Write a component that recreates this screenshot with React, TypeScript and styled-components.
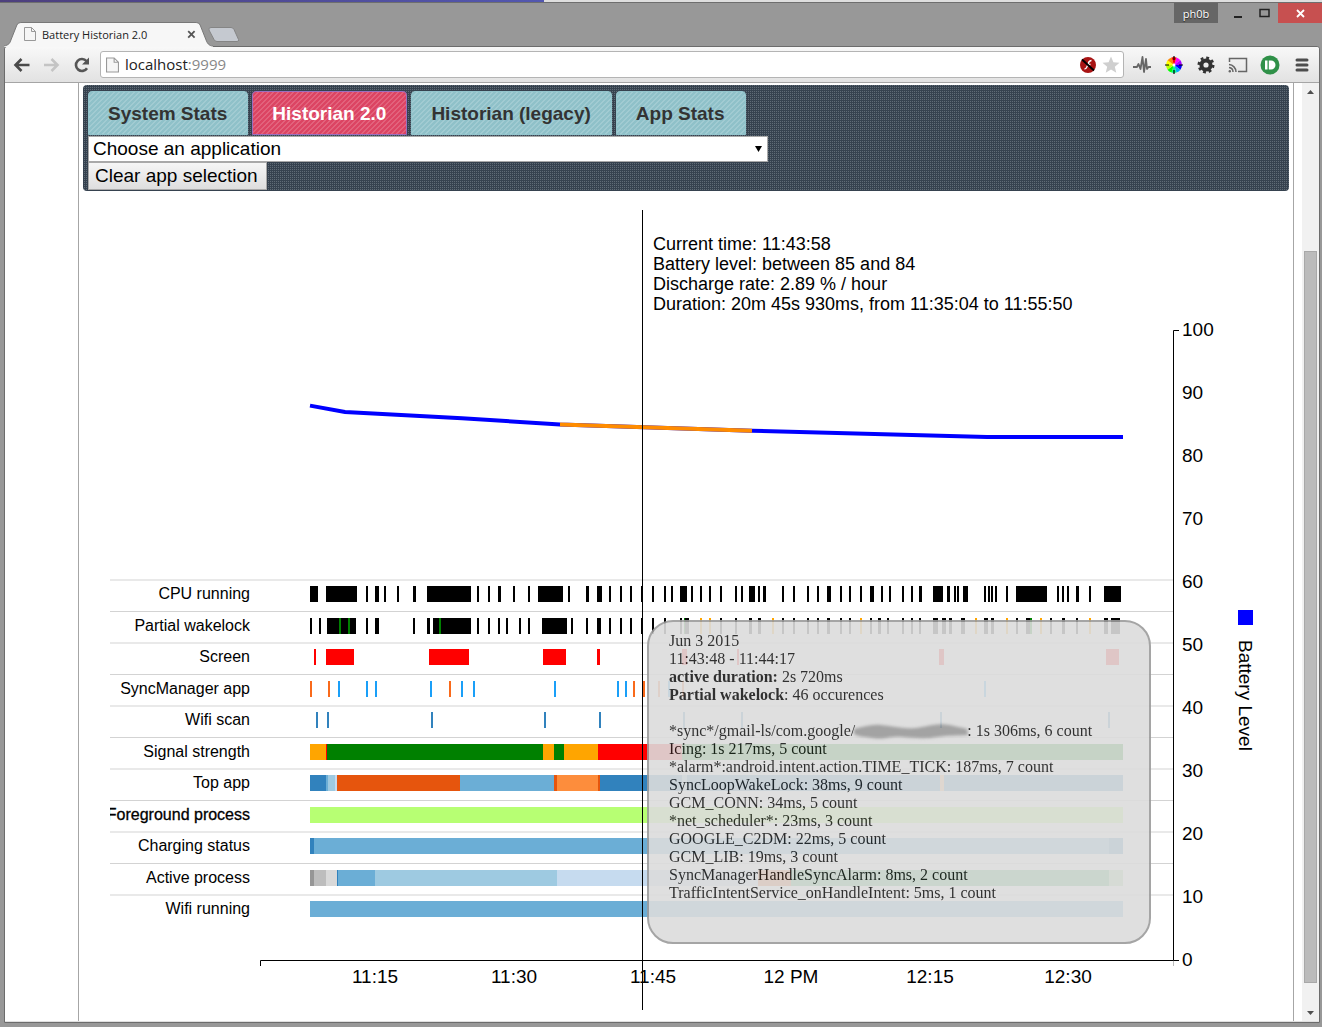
import React from "react";
import styled, { createGlobalStyle, css } from "styled-components";

const SANS = '"Liberation Sans", Arial, sans-serif';
const UI = '"Open Sans", "Noto Sans", sans-serif';
const SERIF = '"Liberation Serif", "Times New Roman", serif';

const GlobalStyle = createGlobalStyle`
  * { box-sizing: border-box; }
  body { margin: 0; background: #989898; font-family: ${SANS}; color: #000; }
  button, select, input { font-family: inherit; margin: 0; }
`;

/* ---------- browser window ---------- */

const Window = styled.div`
  display: flex;
  flex-direction: column;
  min-height: 100vh;
  background: #989898;
`;

const DesktopStrip = styled.div`
  height: 3px;
  border-bottom: 1px solid #6e6e6e;
  background: linear-gradient(90deg, #4d3f7d 0, #5257b0 544px, #dedede 544px);
`;

const TitleBar = styled.header`
  display: flex;
  align-items: flex-start;
  height: 43px;
`;

const TabStrip = styled.div`
  display: flex;
  flex: 1;
  align-items: flex-end;
  align-self: stretch;
  padding-left: 4px;
`;

const BrowserTab = styled.div`
  position: relative;
  display: flex;
  align-items: center;
  gap: 6px;
  width: 206px;
  height: 24px;
  padding: 0 14px 0 20px;
  font: 11px ${UI};
  color: #222;
  z-index: 1;
`;

const TabShape = styled.svg`
  position: absolute;
  left: 0;
  top: 0;
  z-index: -1;
`;

const TabTitle = styled.span`
  flex: 1;
  white-space: nowrap;
`;

const BareButton = styled.button`
  display: flex;
  align-items: center;
  justify-content: center;
  padding: 0;
  border: 0;
  background: none;
`;

const NewTab = styled(BareButton)`
  align-self: flex-end;
  margin: 0 0 3px -2px;
`;

const Caption = styled.div`
  display: flex;
  height: 20px;
`;

const User = styled(BareButton)`
  width: 44px;
  margin-right: 8px;
  background: #666;
  color: #fff;
  font: 11px ${UI};
  text-shadow: 0 1px 1px #222;
`;

const CaptionButton = styled(BareButton)<{ $wide?: boolean; $close?: boolean }>`
  width: ${(p) => (p.$close ? 44 : p.$wide ? 27 : 25)}px;
  ${(p) => p.$close && css`background: #c75050;`}
`;

const Frame = styled.div`
  display: flex;
  flex: 1;
  flex-direction: column;
  margin: 0 2px 4px 4px;
  border: 1px solid #6c6c6c;
  border-radius: 3px 3px 0 0;
  background: #fff;
`;

const Toolbar = styled.nav`
  display: flex;
  align-items: center;
  height: 36px;
  padding: 0 7px;
  gap: 8px;
  border-bottom: 1px solid #a5a5a5;
  border-radius: 3px 3px 0 0;
  background: linear-gradient(#f8f8f8, #e2e2e2);
`;

const Group = styled.div<{ $gap: number }>`
  display: flex;
  gap: ${(p) => p.$gap}px;
`;

const ToolButton = styled(BareButton)`
  width: 20px;
  height: 20px;
`;

const Omnibox = styled.div`
  display: flex;
  flex: 1;
  align-items: center;
  height: 27px;
  padding: 0 2px 0 5px;
  border: 1px solid #b4b4b4;
  border-radius: 3px;
  background: #fff;
`;

const Url = styled.div`
  flex: 1;
  padding: 0 0 2px 6px;
  font: 15px ${UI};
  color: #222;

  span { color: #888; }
`;

/* ---------- page ---------- */

const Viewport = styled.div`
  display: flex;
  flex: 1;
  border-bottom: 1px solid #e0e0e0;
`;

const Page = styled.main`
  flex: 1;
  min-width: 0;
  margin: 0 8px 0 73px;
  padding: 2px 4px 10px;
  border: solid #a6a6a6;
  border-width: 0 1px;
`;

const Panel = styled.div`
  padding: 6px 5px 1px;
  border-radius: 4px;
  background: conic-gradient(#5f6b76 25%, #36424f 0) 0 0 / 2px 2px;
`;

const Tabs = styled.div`
  display: flex;
  gap: 4px;
`;

const Tab = styled.button<{ $active?: boolean }>`
  height: 44px;
  padding: 1px 20px 0 19px;
  border: ${(p) => (p.$active ? "1px solid #9a6fc0" : "1px solid #93c5cd")};
  border-radius: 4px 4px 0 0;
  background: linear-gradient(
      135deg,
      rgba(255, 255, 255, 0.16) 12%,
      transparent 12%,
      transparent 44%,
      rgba(255, 255, 255, 0.16) 44%,
      rgba(255, 255, 255, 0.16) 62%,
      transparent 62%,
      transparent 94%,
      rgba(255, 255, 255, 0.16) 94%
    )
    0 0 / 5px 5px ${(p) => (p.$active ? "#dc4463" : "#8fc1c9")};
  color: ${(p) => (p.$active ? "#fff" : "#333")};
  font-size: 19px;
  font-weight: bold;
`;

const Field = styled.div`
  position: relative;
  width: 680px;
  max-width: 100%;
  margin-top: 1px;
`;

const AppSelect = styled.select`
  display: block;
  width: 100%;
  height: 26px;
  padding: 0 4px 2px;
  border: 1px solid #a9a9a9;
  border-radius: 0;
  appearance: none;
  background: #fff;
  color: #000;
  font-size: 19px;
`;

const Caret = styled.svg`
  position: absolute;
  right: 6px;
  top: 10px;
  pointer-events: none;
`;

const ClearButton = styled.button`
  display: block;
  height: 28px;
  padding: 0 8px 0 6px;
  border: 1px solid #a9a9a9;
  background: linear-gradient(#f6f6f6, #dedede);
  color: #000;
  font-size: 19px;
`;

/* ---------- chart ---------- */

const ChartArea = styled.section`
  position: relative;
  margin: 19px 0 0 27px;
`;

const Chart = styled.svg`
  display: block;
  width: 100%;
  height: 800px;
  font-family: ${SANS};

  .axis { font-size: 19px; }
  .label { font-size: 16px; }
  .info { font-size: 18px; }
  .bar { shape-rendering: crispEdges; }
`;

const Tooltip = styled.aside`
  position: absolute;
  left: 537px;
  top: 410px;
  width: 504px;
  padding: 10px 20px 40px;
  border: 2px solid #9c9c9c;
  border-radius: 26px;
  background: #dcdcdc;
  color: #1a1a1a;
  font: 16px/18px ${SERIF};
  opacity: 0.9;

  p { margin: 0 0 18px; }
  p:last-child { margin: 0; }
`;

const Smear = styled.svg`
  margin: -3px -2px -4px;
  vertical-align: top;
`;

/* ---------- scrollbar ---------- */

const Scrollbar = styled.div`
  display: flex;
  flex-direction: column;
  width: 17px;
  background: #f1f1f1;
`;

const ArrowButton = styled(BareButton)`
  height: 17px;
`;

const Track = styled.div`
  display: flex;
  flex: 1;
  flex-direction: column;
  padding: 0 2px;
`;

const Thumb = styled.div`
  flex: 732;
  border: 1px solid #a8a8a8;
  background: #bbb;
`;

const Spacer = styled.div<{ $grow: number }>`
  flex: ${(p) => p.$grow};
`;

/* ---------- data ---------- */

type Span = [number, number, string?];
type Series = { name: string; color: string; strong?: boolean; spans: Span[] };

const G = "#008000";
const O = "#ffa500";
const OR = "#f96a1b";

const SERIES: Series[] = [
  {
    name: "CPU running",
    color: "#000",
    spans: [
      [310, 318], [326, 357], [366, 368], [375, 379], [384, 386], [397, 399], [413, 416], [427, 471],
      [477, 479], [488, 490], [498, 501], [513, 515], [528, 530], [538, 563], [568, 570], [586, 589],
      [597, 602], [609, 611], [620, 622], [630, 632], [641, 643], [652, 654], [664, 666], [671, 673],
      [680, 687], [691, 693], [700, 702], [709, 711], [720, 722], [735, 737], [741, 743], [749, 755],
      [758, 760], [763, 766], [782, 784], [793, 795], [807, 809], [817, 819], [827, 831], [840, 842],
      [849, 851], [860, 862], [870, 874], [881, 883], [889, 891], [902, 904], [911, 913], [919, 922],
      [933, 943], [947, 950], [954, 956], [957, 959], [963, 968], [984, 986], [988, 990], [991, 993],
      [995, 997], [1006, 1008], [1016, 1047], [1057, 1059], [1062, 1064], [1067, 1069], [1076, 1079],
      [1089, 1091], [1104, 1121],
    ],
  },
  {
    name: "Partial wakelock",
    color: "#000",
    spans: [
      [310, 312], [319, 321], [327, 356], [339, 341, G], [348, 350, G], [366, 368], [375, 379],
      [413, 415], [427, 430], [433, 471], [439, 441, G], [477, 479], [488, 490], [498, 500], [506, 508],
      [519, 521], [528, 530], [542, 567], [571, 573], [586, 588], [597, 601], [609, 611], [620, 622],
      [630, 632], [641, 643], [652, 654], [664, 666], [680, 682], [684, 685, G], [685, 689],
      [700, 702, O], [709, 711, O], [720, 722], [735, 737], [749, 752], [758, 761], [772, 774, O],
      [782, 784], [793, 795], [807, 809], [817, 819], [827, 830], [840, 842], [849, 851], [860, 862, O],
      [870, 872], [878, 881], [887, 889], [902, 904], [911, 913], [919, 921], [933, 938], [942, 946],
      [949, 952], [961, 965], [975, 977, O], [984, 988], [991, 994], [1006, 1008, O], [1016, 1018],
      [1026, 1030], [1030, 1032, G], [1040, 1042, O], [1050, 1052], [1062, 1065], [1076, 1078],
      [1089, 1091, O], [1104, 1108], [1111, 1120],
    ],
  },
  {
    name: "Screen",
    color: "#f00",
    spans: [
      [314, 316], [326, 354], [429, 469], [543, 566], [597, 600], [682, 687], [737, 739], [939, 944],
      [1106, 1119],
    ],
  },
  {
    name: "SyncManager app",
    color: "#1a9ff8",
    spans: [
      [310, 312, OR], [328, 330, OR], [338, 340], [366, 368], [375, 377], [430, 432], [449, 451, OR],
      [461, 463], [473, 475], [554, 556], [617, 619], [625, 627], [633, 635, OR], [643, 645, OR],
      [658, 660, OR], [668, 670], [682, 684, OR], [984, 986],
    ],
  },
  {
    name: "Wifi scan",
    color: "#3182bd",
    spans: [
      [316, 318], [327, 329], [431, 433], [544, 546], [599, 601], [683, 685], [741, 743], [940, 942],
      [1108, 1110],
    ],
  },
  {
    name: "Signal strength",
    color: G,
    spans: [
      [310, 326, O], [326, 327, "#f00"], [327, 543], [543, 554, O], [554, 564], [564, 598, O],
      [598, 682, "#f00"], [682, 1123],
    ],
  },
  {
    name: "Top app",
    color: "#3182bd",
    spans: [
      [310, 326], [326, 328, "#6baed6"], [328, 335, "#9ecae1"], [335, 337, "#c6dbef"],
      [337, 460, "#e6550d"], [460, 554, "#6baed6"], [554, 557, "#e6550d"], [557, 598, "#fd8d3c"],
      [598, 600, "#e6550d"], [600, 1123], [682, 687, "#9ecae1"], [940, 944, "#fdae6b"],
    ],
  },
  { name: "Foreground process", color: "#b7ff73", strong: true, spans: [[310, 1123]] },
  {
    name: "Charging status",
    color: "#6baed6",
    spans: [[310, 314, "#3182bd"], [314, 1109], [1109, 1123, "#3182bd"]],
  },
  {
    name: "Active process",
    color: "#c6dbef",
    spans: [
      [310, 314, "#969696"], [314, 326, "#bdbdbd"], [326, 337, "#d9d9d9"], [337, 338, "#3182bd"],
      [338, 375, "#6baed6"], [375, 557, "#9ecae1"], [557, 758], [758, 791, "#e6550d"],
      [791, 1109, "#31a354"], [1109, 1123, "#a1d99b"],
    ],
  },
  { name: "Wifi running", color: "#6baed6", spans: [[310, 1123]] },
];

const LEVELS: [number, number][] = [
  [310, 88], [345, 87], [462, 86], [560, 85], [752, 84], [987, 83], [1123, 83],
];
const HIGHLIGHT: [number, number][] = [[560, 85], [752, 84]];

const TIMES: [number, string][] = [
  [375, "11:15"], [514, "11:30"], [653, "11:45"], [791, "12 PM"], [930, "12:15"], [1068, "12:30"],
];

const INFO = [
  "Current time: 11:43:58",
  "Battery level: between 85 and 84",
  "Discharge rate: 2.89 % / hour",
  "Duration: 20m 45s 930ms, from 11:35:04 to 11:55:50",
];

const levelY = (level: number) => 960 - level * 6.3;
const toPoints = (pts: [number, number][]) => pts.map(([x, l]) => `${x},${levelY(l)}`).join(" ");
const barY = (row: number) => Math.round(586.25 + row * 31.5);

function PageIcon({ w = 12, h = 14 }: { w?: number; h?: number }) {
  return (
    <svg width={w} height={h} viewBox="0 0 12 14" fill="#f6f6f6" stroke="#999">
      <path d="M.5.5h7l4 4v9H.5z M7.5.5v4h4" />
    </svg>
  );
}

function BrowserChrome() {
  return (
    <TitleBar>
      <TabStrip>
        <BrowserTab>
          <TabShape width="210" height="25" viewBox="0 0 212 25" preserveAspectRatio="none">
            <path
              d="M0 25V24C5 23 6 21 7 18L13 3Q14 .5 17 .5H194Q197 .5 198 3L204 18C205 21 207 24 211 24V25z"
              fill="#f7f7f7"
            />
            <path
              d="M0 24C5 23 6 21 7 18L13 3Q14 .5 17 .5H194Q197 .5 198 3L204 18C205 21 207 24 211 24"
              fill="none"
              stroke="#777"
            />
          </TabShape>
          <PageIcon />
          <TabTitle>Battery Historian 2.0</TabTitle>
          <BareButton aria-label="Close tab">
            <svg width="9" height="9" viewBox="0 0 9 9" stroke="#555" strokeWidth="1.8">
              <path d="M1.2 1.2l6.4 6.4M7.6 1.2L1.2 7.6" />
            </svg>
          </BareButton>
        </BrowserTab>
        <NewTab aria-label="New tab">
          <svg width="32" height="16" viewBox="0 0 32 16">
            <path
              d="M3 .5h20q2 0 3 2l4.500 10q.8 2-1.500 2H9q-2 0-3-2L1 3Q.2.5 3 .5z"
              fill="#c5c9d0"
              stroke="#858585"
            />
          </svg>
        </NewTab>
      </TabStrip>
      <Caption>
        <User>ph0b</User>
        <CaptionButton aria-label="Minimize">
          <svg width="12" height="12"><path d="M1 9h8v2H1z" fill="#222" /></svg>
        </CaptionButton>
        <CaptionButton $wide aria-label="Maximize">
          <svg width="12" height="10"><path d="M1 1.500h9v7H1z" fill="none" stroke="#222" strokeWidth="1.500" /></svg>
        </CaptionButton>
        <CaptionButton $close aria-label="Close">
          <svg width="9" height="9" viewBox="0 0 9 9" stroke="#fff" strokeWidth="1.800">
            <path d="M1 1l7 7M8 1L1 8" />
          </svg>
        </CaptionButton>
      </Caption>
    </TitleBar>
  );
}

function NavBar() {
  return (
    <Toolbar>
      <Group $gap={10}>
        <ToolButton aria-label="Back">
          <svg width="18" height="14" fill="none" stroke="#4a4a4a" strokeWidth="2.600">
            <path d="M8.500 1L2.500 7l6 6M3 7h13.500" />
          </svg>
        </ToolButton>
        <ToolButton aria-label="Forward">
          <svg width="18" height="14" fill="none" stroke="#c4c4c4" strokeWidth="2.600">
            <path d="M8.500 1l6 6-6 6M14 7H1" />
          </svg>
        </ToolButton>
        <ToolButton aria-label="Reload">
          <svg width="18" height="18" fill="none" stroke="#555" strokeWidth="2.600">
            <path d="M14 12.200A6 6 0 1 1 13.500 5" />
            <path d="M16 1.500v7H9z" fill="#555" stroke="none" />
          </svg>
        </ToolButton>
      </Group>
      <Omnibox>
        <PageIcon w={13} h={16} />
        <Url>
          localhost<span>:9999</span>
        </Url>
        <Group $gap={3}>
          <ToolButton aria-label="Plugin blocked">
            <svg width="18" height="18" viewBox="0 0 18 18">
              <circle cx="9" cy="9" r="8" fill="#a81414" />
              <path d="M12.500 4.500c-3 0-3 2.500-3.800 4.500S7.500 13 5.500 13M8 8.500h3.500" fill="none" stroke="#fff" strokeWidth="1.400" />
              <path d="M3 3.500l12 11" stroke="#000" strokeWidth="2" />
            </svg>
          </ToolButton>
          <ToolButton aria-label="Bookmark">
            <svg width="18" height="18" viewBox="0 0 18 18" fill="#cfcfcf">
              <path d="M9 .5l2.400 5.800 6.100.4-4.700 4 1.500 6L9 13.400l-5.300 3.300 1.500-6-4.700-4 6.100-.4z" />
            </svg>
          </ToolButton>
        </Group>
      </Omnibox>
      <Group $gap={12}>
        <ToolButton aria-label="Activity">
          <svg width="20" height="20" fill="none" stroke="#666" strokeWidth="1.800" strokeLinejoin="round">
            <path d="M1 12h4l1.500-3 2 5L10.500 2l1.500 15L14 4l1 10 1.500-2H19" />
          </svg>
        </ToolButton>
        <ToolButton aria-label="Color picker">
          <svg width="20" height="20" viewBox="-10 -10 20 20">
            {["#f0f", "#a0f", "#00f", "#0af", "#0f8", "#0f0", "#bf0", "#ff0", "#f80", "#f00"].map((c, i) => (
              <path key={c} d="M0 0L0-8A8 8 0 0 1 4.700-6.470z" fill={c} transform={`rotate(${i * 36 + 18})`} />
            ))}
            <path d="M0-9v4M0 5v4M-9 0h4M5 0h4" stroke="#000" strokeWidth="1.200" />
            <circle r="1.500" fill="#fff" />
          </svg>
        </ToolButton>
        <ToolButton aria-label="Settings">
          <svg width="18" height="18" viewBox="-9 -9 18 18" fill="none" stroke="#333">
            <circle r="4.600" strokeWidth="4" />
            <circle r="7.300" strokeWidth="2.400" strokeDasharray="2.870 2.863" />
          </svg>
        </ToolButton>
        <ToolButton aria-label="Cast">
          <svg width="20" height="16" viewBox="0 0 20 16" fill="none" stroke="#666" strokeWidth="1.500">
            <path d="M1.500 5V1.500h17v13H10M1 7.500a7.500 7.500 0 0 1 7 7.500M1 10.500A4.500 4.500 0 0 1 5 15" />
            <circle cx="1.800" cy="14.200" r="1.200" fill="#666" stroke="none" />
          </svg>
        </ToolButton>
        <ToolButton aria-label="Push">
          <svg width="20" height="20" viewBox="0 0 20 20">
            <circle cx="10" cy="10" r="9.500" fill="#2f9048" />
            <path d="M5 5.500h2.500v9H5zM8.800 5.500h2.200a4.500 4.500 0 0 1 0 9H8.800z" fill="#fff" />
          </svg>
        </ToolButton>
        <ToolButton aria-label="Menu">
          <svg width="14" height="14" stroke="#4d4d4d" strokeWidth="3" strokeLinecap="round">
            <path d="M2 2h10M2 7h10M2 12h10" />
          </svg>
        </ToolButton>
      </Group>
    </Toolbar>
  );
}

function HistorianChart() {
  return (
    <Chart role="img" aria-label="Battery level and activity over time">
      <g transform="translate(-110 -210)">
        {SERIES.map((s, row) => (
          <g key={s.name}>
            <path d={`M110 ${580 + row * 31.5}H1173`} stroke="#d3d3d3" />
            <text
              className="label"
              x="250"
              y={barY(row) + 13}
              textAnchor="end"
              stroke={s.strong ? "#000" : "none"}
              strokeWidth="0.3"
            >
              {s.name}
            </text>
            {s.spans.map(([from, to, color]) => (
              <rect
                key={`${from}-${to}`}
                className="bar"
                x={from}
                y={barY(row)}
                width={to - from}
                height="16"
                fill={color ?? s.color}
              />
            ))}
          </g>
        ))}

        <path d="M1179 330.500H1173.500V960.500H1179" fill="none" stroke="#000" />
        <path d="M260.500 966V960.500H1173.500" fill="none" stroke="#000" />
        <path d="M1173.500 961V966" stroke="#bbb" />
        {[0, 10, 20, 30, 40, 50, 60, 70, 80, 90, 100].map((l) => (
          <text key={l} className="axis" x="1182" y={966 - l * 6.3}>
            {l}
          </text>
        ))}
        {TIMES.map(([x, t]) => (
          <text key={t} className="axis" x={x} y="983" textAnchor="middle">
            {t}
          </text>
        ))}

        <polyline points={toPoints(LEVELS)} fill="none" stroke="#00f" strokeWidth="4" />
        <polyline points={toPoints(HIGHLIGHT)} fill="none" stroke="#ff8c00" strokeWidth="4" />

        <rect x="1238" y="610" width="15" height="15" fill="#00f" />
        <text className="axis" transform="translate(1239 640) rotate(90)">
          Battery Level
        </text>

        <path d="M642.500 210V1010" stroke="#000" />
        {INFO.map((line, i) => (
          <text key={line} className="info" x="653" y={250 + i * 20}>
            {line}
          </text>
        ))}
      </g>
    </Chart>
  );
}

function WakelockTooltip() {
  return (
    <Tooltip>
      <p>
        Jun 3 2015
        <br />
        11:43:48 - 11:44:17
        <br />
        <b>active duration:</b> 2s 720ms
        <br />
        <b>Partial wakelock</b>: 46 occurences
      </p>
      <p>
        *sync*/gmail-ls/com.google/
        <Smear width="116" height="25" viewBox="0 0 116 25">
          <defs>
            <filter id="soft" x="-10%" y="-40%" width="120%" height="180%">
              <feGaussianBlur stdDeviation="1.5" />
            </filter>
          </defs>
          <path
            d="M1 10C10 8 18 5 28 6S42 8 52 9 68 8 80 6 100 7 114 10L115 16C102 17 96 16 84 18S64 19 50 18 32 21 20 19 6 18 1 15z"
            fill="#9a9a9a"
            filter="url(#soft)"
          />
        </Smear>
        : 1s 306ms, 6 count
        <br />
        Icing: 1s 217ms, 5 count
        <br />
        *alarm*:android.intent.action.TIME_TICK: 187ms, 7 count
        <br />
        SyncLoopWakeLock: 38ms, 9 count
        <br />
        GCM_CONN: 34ms, 5 count
        <br />
        *net_scheduler*: 23ms, 3 count
        <br />
        GOOGLE_C2DM: 22ms, 5 count
        <br />
        GCM_LIB: 19ms, 3 count
        <br />
        SyncManagerHandleSyncAlarm: 8ms, 2 count
        <br />
        TrafficIntentService_onHandleIntent: 5ms, 1 count
      </p>
    </Tooltip>
  );
}

export default function App() {
  return (
    <Window>
      <GlobalStyle />
      <DesktopStrip />
      <BrowserChrome />
      <Frame>
        <NavBar />
        <Viewport>
          <Page>
            <Panel>
              <Tabs>
                <Tab>System Stats</Tab>
                <Tab $active>Historian 2.0</Tab>
                <Tab>Historian (legacy)</Tab>
                <Tab>App Stats</Tab>
              </Tabs>
              <Field>
                <AppSelect aria-label="Application">
                  <option>Choose an application</option>
                </AppSelect>
                <Caret width="7" height="6">
                  <path d="M0 0h7L3.500 6z" />
                </Caret>
              </Field>
              <ClearButton>Clear app selection</ClearButton>
            </Panel>
            <ChartArea>
              <HistorianChart />
              <WakelockTooltip />
            </ChartArea>
          </Page>
          <Scrollbar>
            <ArrowButton aria-label="Scroll up">
              <svg width="7" height="4"><path d="M0 4h7L3.500 0z" fill="#505050" /></svg>
            </ArrowButton>
            <Track>
              <Spacer $grow={151} />
              <Thumb />
              <Spacer $grow={21} />
            </Track>
            <ArrowButton aria-label="Scroll down">
              <svg width="7" height="4"><path d="M0 0h7L3.500 4z" fill="#505050" /></svg>
            </ArrowButton>
          </Scrollbar>
        </Viewport>
      </Frame>
    </Window>
  );
}
